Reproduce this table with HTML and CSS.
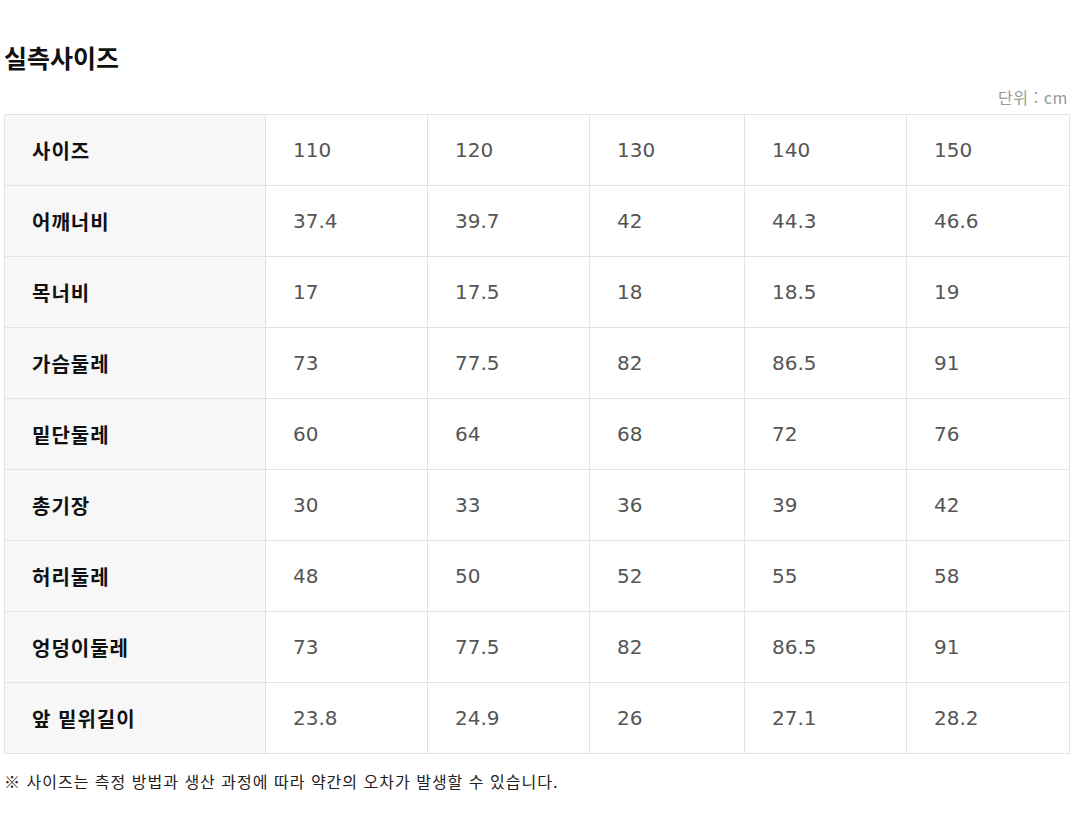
FILE: index.html
```html
<!DOCTYPE html>
<html lang="ko">
<head>
<meta charset="utf-8">
<title>실측사이즈</title>
<link rel="stylesheet" href="styles.css">
</head>
<body>
<div class="page">
  <h2 class="title">실측사이즈</h2>
  <div class="unit">단위 : cm</div>
  <table class="size-table">
    <colgroup>
      <col class="c0"><col class="c1"><col class="c2"><col class="c3"><col class="c4"><col class="c5">
    </colgroup>
    <tbody>
      <tr><th>사이즈</th><td>110</td><td>120</td><td>130</td><td>140</td><td>150</td></tr>
      <tr><th>어깨너비</th><td>37.4</td><td>39.7</td><td>42</td><td>44.3</td><td>46.6</td></tr>
      <tr><th>목너비</th><td>17</td><td>17.5</td><td>18</td><td>18.5</td><td>19</td></tr>
      <tr><th>가슴둘레</th><td>73</td><td>77.5</td><td>82</td><td>86.5</td><td>91</td></tr>
      <tr><th>밑단둘레</th><td>60</td><td>64</td><td>68</td><td>72</td><td>76</td></tr>
      <tr><th>총기장</th><td>30</td><td>33</td><td>36</td><td>39</td><td>42</td></tr>
      <tr><th>허리둘레</th><td>48</td><td>50</td><td>52</td><td>55</td><td>58</td></tr>
      <tr><th>엉덩이둘레</th><td>73</td><td>77.5</td><td>82</td><td>86.5</td><td>91</td></tr>
      <tr><th>앞 밑위길이</th><td>23.8</td><td>24.9</td><td>26</td><td>27.1</td><td>28.2</td></tr>
    </tbody>
  </table>
  <p class="note">※ 사이즈는 측정 방법과 생산 과정에 따라 약간의 오차가 발생할 수 있습니다.</p>
</div>
</body>
</html>
```

FILE: styles.css
```css
html, body {
  margin: 0;
  padding: 0;
  background: #fff;
}
body {
  font-family: "Noto Sans CJK KR", "Noto Sans", sans-serif;
  color: #111;
}
.page {
  padding: 0 3px 0 4px;
}
.title {
  margin: 0;
  padding-top: 40px;
  font-size: 25px;
  line-height: 34px;
  font-weight: 700;
  color: #111;
  letter-spacing: 0;
}
.unit {
  margin-top: 11px;
  text-align: right;
  font-size: 16px;
  line-height: 24px;
  color: #999;
  letter-spacing: 0.6px;
  padding-right: 1px;
}
.size-table {
  margin-top: 5px;
  width: 1065px;
  border-collapse: collapse;
  table-layout: fixed;
}
.c0 { width: 261px; }
.c1 { width: 162px; }
.c2 { width: 162px; }
.c3 { width: 155px; }
.c4 { width: 162px; }
.c5 { width: 163px; }
.size-table th,
.size-table td {
  height: 70px;
  border: 1px solid #e3e3e3;
  padding: 0 0 0 27px;
  text-align: left;
  vertical-align: middle;
}
.size-table th {
  background: #f7f7f7;
  font-size: 20px;
  font-weight: 700;
  color: #111;
  letter-spacing: 1px;
}
.size-table td {
  font-family: "DejaVu Sans", "Noto Sans CJK KR", sans-serif;
  font-size: 20px;
  color: #555;
}
.note {
  margin: 16px 0 0;
  font-size: 16px;
  line-height: 22px;
  letter-spacing: 1px;
  color: #222;
}
```
